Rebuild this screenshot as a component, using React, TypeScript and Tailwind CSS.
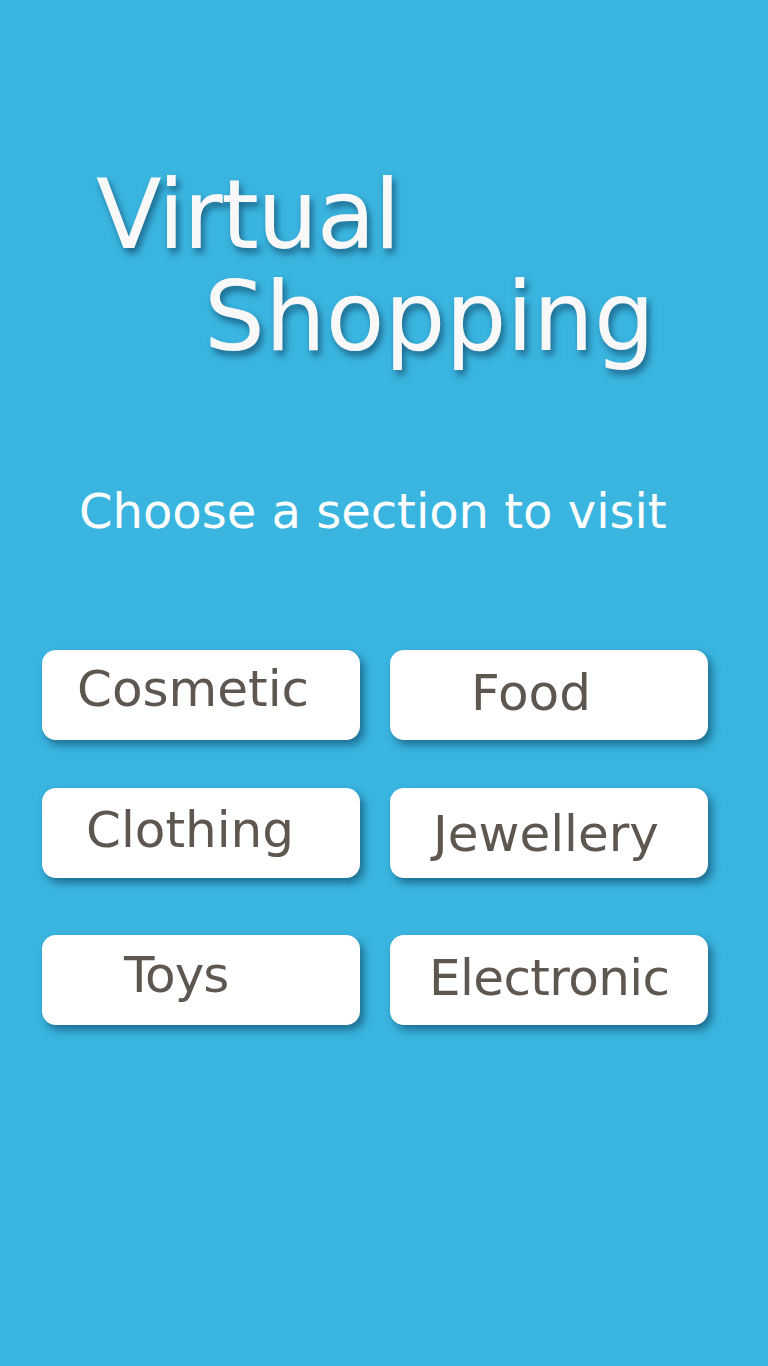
import React from "react";

const font = { fontFamily: '"DejaVu Sans", sans-serif' };

function Btn({ label, cls }: { label: string; cls: string }) {
  return (
    <div
      className={`h-[90px] w-[318px] rounded-[14px] bg-white shadow-[4px_5px_8px_rgba(10,60,90,0.6)] text-[50px] leading-[50px] text-[#5e5750] whitespace-nowrap ${cls}`}
    >
      {label}
    </div>
  );
}

export default function App() {
  return (
    <div className="min-h-[1366px] w-full bg-[#3ab5e0]" style={font}>
      <div className="pt-[164px] text-[96px] leading-[102px] text-[#f8f8f8] [text-shadow:3px_5px_7px_rgba(10,50,80,0.6)]">
        <div className="pl-[96px] tracking-[-1.5px]">Virtual</div>
        <div className="pl-[204px]">Shopping</div>
      </div>
      <div className="mt-[119px] pl-[79px] text-[48px] leading-[48px] text-white whitespace-nowrap">
        Choose a section to visit
      </div>
      <div className="mt-[115px] pl-[42px] flex flex-col">
        <div className="flex gap-[30px]">
          <Btn label="Cosmetic" cls="pl-[35px] pt-[14px]" />
          <Btn label="Food" cls="pl-[81px] pt-[18px]" />
        </div>
        <div className="flex gap-[30px] mt-[48px]">
          <Btn label="Clothing" cls="pl-[44px] pt-[17px]" />
          <Btn label="Jewellery" cls="pl-[43px] pt-[21px]" />
        </div>
        <div className="flex gap-[30px] mt-[57px]">
          <Btn label="Toys" cls="pl-[82px] pt-[15px] tracking-[-1px]" />
          <Btn label="Electronic" cls="pl-[39px] pt-[18px] tracking-[-0.6px]" />
        </div>
      </div>
    </div>
  );
}
